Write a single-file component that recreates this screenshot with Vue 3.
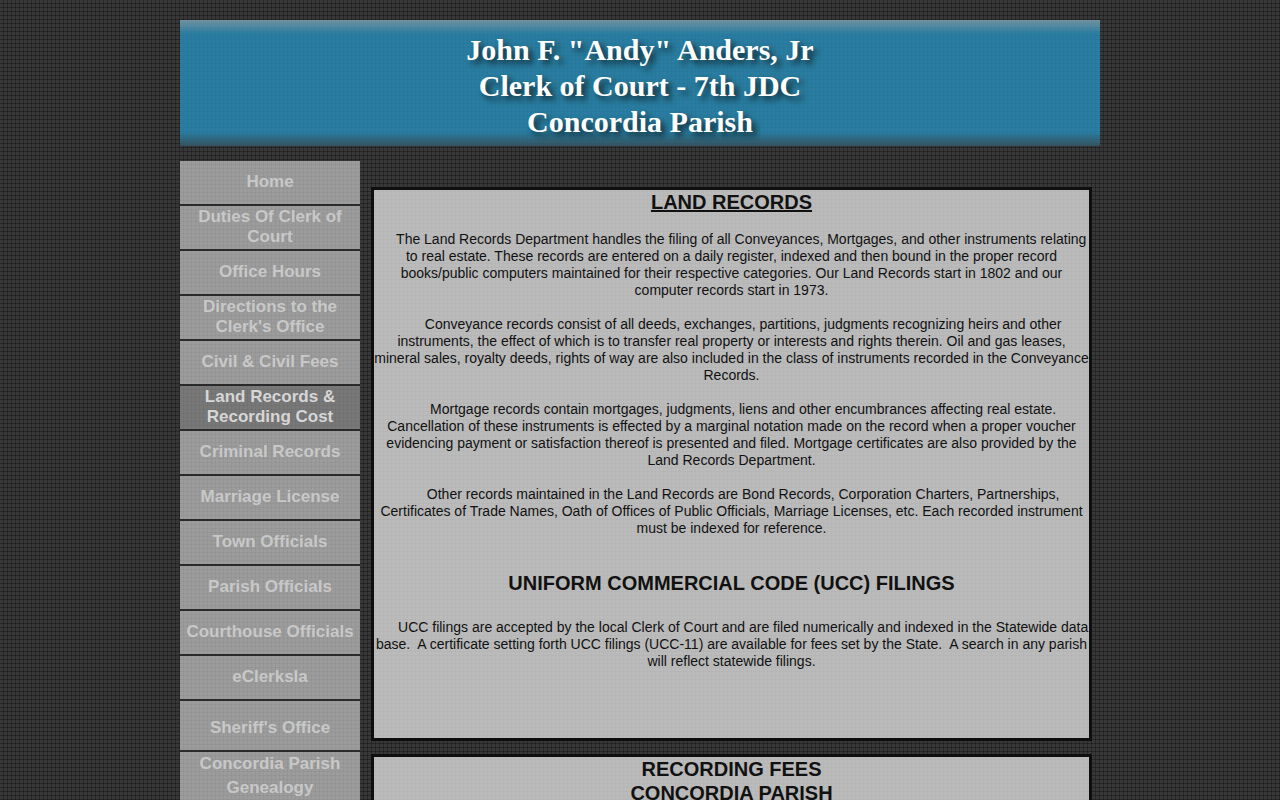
<script setup>
const nav = [
  { label: ['Home'] },
  { label: ['Duties Of Clerk of', 'Court'] },
  { label: ['Office Hours'] },
  { label: ['Directions to the', "Clerk's Office"] },
  { label: ['Civil & Civil Fees'] },
  { label: ['Land Records &', 'Recording Cost'], active: true },
  { label: ['Criminal Records'] },
  { label: ['Marriage License'] },
  { label: ['Town Officials'] },
  { label: ['Parish Officials'] },
  { label: ['Courthouse Officials'] },
  { label: ['eClerksla'] },
  { label: ["Sheriff's Office"], spaced: true },
  { label: ['Concordia Parish', 'Genealogy'], tall: true },
]

const indent = '\u00a0'.repeat(6)
const landRecords = [
  [
    '\u00a0'.repeat(5) + 'The Land Records Department handles the filing of all Conveyances, Mortgages, and other instruments relating',
    'to real estate. These records are entered on a daily register, indexed and then bound in the proper record',
    'books/public computers maintained for their respective categories. Our Land Records start in 1802 and our',
    'computer records start in 1973.',
  ],
  [
    indent + 'Conveyance records consist of all deeds, exchanges, partitions, judgments recognizing heirs and other',
    'instruments, the effect of which is to transfer real property or interests and rights therein. Oil and gas leases,',
    'mineral sales, royalty deeds, rights of way are also included in the class of instruments recorded in the Conveyance',
    'Records.',
  ],
  [
    indent + 'Mortgage records contain mortgages, judgments, liens and other encumbrances affecting real estate.',
    'Cancellation of these instruments is effected by a marginal notation made on the record when a proper voucher',
    'evidencing payment or satisfaction thereof is presented and filed. Mortgage certificates are also provided by the',
    'Land Records Department.',
  ],
  [
    indent + 'Other records maintained in the Land Records are Bond Records, Corporation Charters, Partnerships,',
    'Certificates of Trade Names, Oath of Offices of Public Officials, Marriage Licenses, etc. Each recorded instrument',
    'must be indexed for reference.',
  ],
]
const ucc = [
  indent + 'UCC filings are accepted by the local Clerk of Court and are filed numerically and indexed in the Statewide data',
  'base.\u00a0 A certificate setting forth UCC filings (UCC-11) are available for fees set by the State.\u00a0 A search in any parish',
  'will reflect statewide filings.',
]
</script>

<template>
  <div class="page">
    <header class="banner">
      <h1>John F. "Andy" Anders, Jr<br />Clerk of Court - 7th JDC<br />Concordia Parish</h1>
    </header>
    <div class="columns">
      <nav class="menu" aria-label="Main">
        <a
          v-for="item in nav"
          :key="item.label[0]"
          href="#"
          :class="{ active: item.active, spaced: item.spaced, tall: item.tall }"
          :aria-current="item.active ? 'page' : undefined"
        >
          <span v-for="line in item.label" :key="line">{{ line }}</span>
        </a>
      </nav>
      <main class="content">
        <section class="panel">
          <h2 class="underlined">LAND RECORDS</h2>
          <p v-for="(lines, i) in landRecords" :key="i">
            <template v-for="(line, j) in lines" :key="j"><br v-if="j" />{{ line }}</template>
          </p>
          <h2 class="ucc">UNIFORM COMMERCIAL CODE (UCC) FILINGS</h2>
          <p class="filings">
            <template v-for="(line, j) in ucc" :key="j"><br v-if="j" />{{ line }}</template>
          </p>
        </section>
        <section class="panel">
          <h2>RECORDING FEES<br />CONCORDIA PARISH</h2>
        </section>
      </main>
    </div>
  </div>
</template>

<style>
body {
  background-color: #383838;
  background-image:
    linear-gradient(to right, transparent 3px, rgba(20, 20, 20, 0.45) 3px),
    linear-gradient(to bottom, transparent 3px, rgba(20, 20, 20, 0.5) 3px);
  background-size: 4px 4px;
}
</style>

<style scoped>
.page {
  max-width: 920px;
  margin: 0 auto;
  padding-top: 20px;
  font-family: 'Liberation Sans', Arial, sans-serif;
}
.banner {
  padding: 12px 0 6px;
  background:
    linear-gradient(to bottom, rgba(160, 160, 160, 0.6), rgba(140, 150, 170, 0) 14px),
    linear-gradient(to top, rgba(60, 60, 60, 0.65), rgba(60, 60, 60, 0) 14px),
    rgba(40, 140, 182, 0.83);
}
h1 {
  margin: 0;
  color: #fff;
  font: bold 30px/36px 'Liberation Serif', 'Times New Roman', serif;
  text-align: center;
  text-shadow: 4px 4px 6px rgba(0, 0, 0, 0.7);
}
.columns {
  display: flex;
  align-items: flex-start;
  gap: 11px;
  padding-top: 15px;
}
.menu {
  display: flex;
  flex: 0 0 180px;
  flex-direction: column;
  gap: 2px;
  background: #2a2a2a;
}
.menu a {
  display: flex;
  flex-direction: column;
  justify-content: center;
  min-height: 43px;
  padding-bottom: 2px;
  box-sizing: border-box;
  background: #9c9c9c;
  background-image:
    linear-gradient(to right, transparent 3px, rgba(0, 0, 0, 0.04) 3px),
    linear-gradient(to bottom, transparent 3px, rgba(0, 0, 0, 0.04) 3px);
  background-size: 4px 4px;
  color: #c8c8c8;
  font-size: 17px;
  font-weight: bold;
  line-height: 20px;
  text-align: center;
  text-decoration: none;
  white-space: nowrap;
}
.menu a.active {
  background-color: #787878;
  color: #d6d6d6;
}
.menu a.spaced {
  min-height: 49px;
  padding: 4px 0 0;
}
.menu a.tall {
  line-height: 24px;
}
.content {
  display: flex;
  flex: 1;
  flex-direction: column;
  gap: 13px;
  min-width: 0;
  padding: 26px 8px 0 0;
}
.panel {
  border: 3px solid #0e0e0e;
  background: rgba(226, 226, 226, 0.77);
  background-clip: padding-box;
  color: #111;
  text-align: center;
  white-space: nowrap;
}
h2 {
  margin: 0;
  font-size: 20px;
  line-height: 24px;
}
.underlined {
  text-decoration: underline;
}
p {
  margin: 17px 0 0;
  font-size: 14px;
  line-height: 17px;
}
.ucc {
  margin-top: 34px;
}
.filings {
  margin: 24px 0 68px;
}
</style>
